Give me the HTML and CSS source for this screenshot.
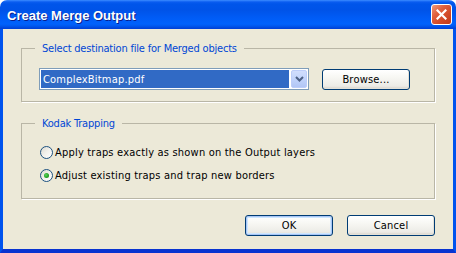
FILE: index.html
```html
<!DOCTYPE html>
<html>
<head>
<meta charset="utf-8">
<link rel="stylesheet" href="styles.css">
</head>
<body>
<div class="window">
  <div class="titlebar">
    <span class="title">Create Merge Output</span>
    <span class="close">
      <svg width="11" height="11" viewBox="0 0 11 11"><path d="M1.5 1.5 L9.5 9.5 M9.5 1.5 L1.5 9.5" stroke="#fff" stroke-width="2.2" stroke-linecap="square" fill="none"/></svg>
    </span>
  </div>
  <div class="client">
    <fieldset class="group g1">
      <legend>Select destination file for Merged objects</legend>
      <div class="file-row">
        <div class="combo">
          <span class="combo-value">ComplexBitmap.pdf</span>
          <span class="combo-btn">
            <svg width="9" height="6" viewBox="0 0 9 6"><path d="M1 1 L4.5 4.5 L8 1" stroke="#4d6185" stroke-width="2" fill="none"/></svg>
          </span>
        </div>
        <span class="btn browse">Browse...</span>
      </div>
    </fieldset>
    <fieldset class="group g2">
      <legend>Kodak Trapping</legend>
      <div class="radios">
        <div class="radio"><span class="circle"></span><span class="radio-label">Apply traps exactly as shown on the Output layers</span></div>
        <div class="radio checked"><span class="circle"><span class="dot"></span></span><span class="radio-label">Adjust existing traps and trap new borders</span></div>
      </div>
    </fieldset>
    <div class="actions">
      <span class="btn default">OK</span>
      <span class="btn">Cancel</span>
    </div>
  </div>
</div>
</body>
</html>
```
FILE: styles.css
```css
* { box-sizing: border-box; }
html, body { margin: 0; padding: 0; background: #ffffff; }
body {
  font-family: "DejaVu Sans Condensed", "DejaVu Sans", sans-serif;
  font-stretch: condensed;
  font-size: 11px;
  letter-spacing: 0.2px;
  color: #000;
}
.window {
  width: 456px;
  height: 253px;
  display: flex;
  flex-direction: column;
}
.titlebar {
  height: 29px;
  flex: none;
  display: flex;
  align-items: center;
  justify-content: space-between;
  padding: 1px 4px 0 7px;
  border-radius: 7px 7px 0 0;
  background: linear-gradient(to bottom,
    #3c8cff 0px, #0a5cf0 2px, #0055ea 4px, #0053e8 10px,
    #005cf6 18px, #0062fc 24px, #0058ee 26px, #0046dc 28px, #0040d6 29px);
}
.title {
  font-family: "Liberation Sans", Arial, sans-serif;
  font-stretch: normal;
  letter-spacing: 0;
  font-weight: bold;
  font-size: 13px;
  color: #fff;
  text-shadow: 1px 1px 0 #0a1e8c;
}
.close {
  width: 21px;
  height: 21px;
  margin-top: -1px;
  border: 1px solid #fff;
  border-radius: 3px;
  display: flex;
  align-items: center;
  justify-content: center;
  background: linear-gradient(135deg, #f09a7c 0%, #e0603e 35%, #d24a28 65%, #c0391a 100%);
}
.client {
  flex: 1;
  background: #ece9d8;
  border-left: 3px solid #0053ee;
  border-right: 3px solid #0053ee;
  border-bottom: 4px solid #0833d0;
  padding: 13px 18px 0 18px;
  display: flex;
  flex-direction: column;
}
.group {
  margin: 0;
  padding: 0;
  min-width: 0;
  border: 1px solid #b9b6a6;
  box-shadow: 1px 1px 0 #ffffff;
}
.group legend {
  margin-left: 13px;
  padding: 0 7px;
  line-height: 13px;
  letter-spacing: -0.2px;
  color: #0046d5;
}
.g2 { margin-top: 15px; }
.file-row {
  display: flex;
  align-items: flex-start;
  gap: 13px;
  padding: 13px 0 11px 17px;
}
.combo {
  width: 270px;
  height: 22px;
  border: 1px solid #7f9db9;
  background: #fff;
  padding: 1px;
  display: flex;
}
.combo-value {
  flex: 1;
  background: #316ac5;
  color: #fff;
  padding-left: 2px;
  margin-right: 2px;
  display: flex;
  align-items: center;
}
.combo-btn {
  width: 16px;
  border-radius: 2px;
  background: linear-gradient(to bottom, #d1defd 0%, #c1d3fb 50%, #b2c6f5 100%);
  border: 1px solid #bccdf9;
  display: flex;
  align-items: center;
  justify-content: center;
}
.btn {
  display: flex;
  align-items: center;
  justify-content: center;
  width: 88px;
  height: 21px;
  border: 1px solid #003c74;
  border-radius: 3px;
  background: linear-gradient(to bottom, #ffffff 0%, #f7f7f3 40%, #ecebe6 85%, #d6d0c5 100%);
  box-shadow: inset -1px -1px 0 #e3e1d8;
}
.browse { margin-top: 1px; }
.btn.default {
  box-shadow: inset 0 0 0 1px #a8c5f5, inset 0 0 0 2px #cee7ff;
}
.radios {
  padding: 11px 0 11px 18px;
  display: flex;
  flex-direction: column;
}
.radio {
  height: 23px;
  display: flex;
  align-items: center;
  gap: 2px;
}
.circle {
  width: 13px;
  height: 13px;
  border: 1px solid #1c5180;
  border-radius: 50%;
  background: linear-gradient(135deg, #dcdad0 0%, #f2f1ec 50%, #ffffff 100%);
  display: flex;
  align-items: center;
  justify-content: center;
}
.dot {
  width: 5px;
  height: 5px;
  border-radius: 50%;
  background: radial-gradient(circle at 40% 40%, #5ed35e 0%, #21a121 60%, #1a8a1a 100%);
}
.actions {
  margin-top: 16px;
  display: flex;
  justify-content: flex-end;
  gap: 14px;
}
```
